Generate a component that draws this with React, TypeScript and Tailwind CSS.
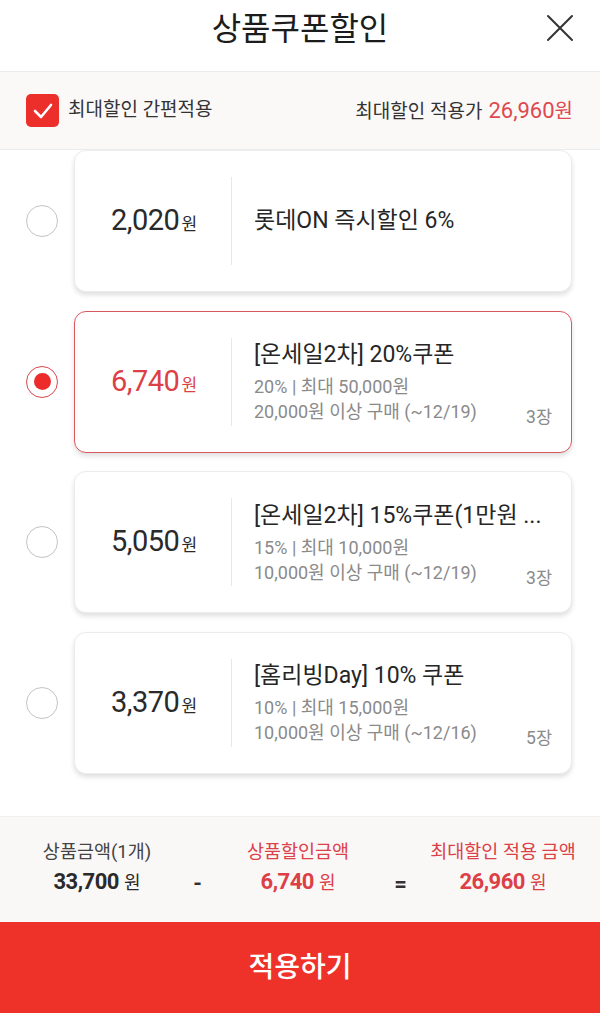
import React from "react";

type Coupon = {
  amount: string;
  title: string;
  sub?: string[];
  count?: string;
  selected?: boolean;
};

const coupons: Coupon[] = [
  { amount: "2,020", title: "롯데ON 즉시할인 6%" },
  {
    amount: "6,740",
    title: "[온세일2차] 20%쿠폰",
    sub: ["20% | 최대 50,000원", "20,000원 이상 구매 (~12/19)"],
    count: "3장",
    selected: true,
  },
  {
    amount: "5,050",
    title: "[온세일2차] 15%쿠폰(1만원 ...",
    sub: ["15% | 최대 10,000원", "10,000원 이상 구매 (~12/19)"],
    count: "3장",
  },
  {
    amount: "3,370",
    title: "[홈리빙Day] 10% 쿠폰",
    sub: ["10% | 최대 15,000원", "10,000원 이상 구매 (~12/16)"],
    count: "5장",
  },
];

function Radio({ on }: { on?: boolean }) {
  return on ? (
    <div className="w-[32px] h-[32px] rounded-full border-[1.5px] border-[#d8474d] flex items-center justify-center shrink-0">
      <div className="w-[17px] h-[17px] rounded-full bg-[#ee2b2b]" />
    </div>
  ) : (
    <div className="w-[32px] h-[32px] rounded-full border-[1.5px] border-[#c4c4c4] shrink-0" />
  );
}

function CouponCard({ c }: { c: Coupon }) {
  const tone = c.selected ? "text-[#dc3f45]" : "text-[#2a2a2a]";
  return (
    <div className="flex items-center pl-[26px] pr-[28px] gap-[16px]">
      <Radio on={c.selected} />
      <div
        className={
          "relative flex-1 min-w-0 h-[142px] rounded-[12px] bg-white flex items-center shadow-[0_3px_5px_rgba(0,0,0,0.13)] " +
          (c.selected ? "border-[1.5px] border-[#d9585d]" : "border border-[#ececec]")
        }
      >
        <div className="w-[156px] shrink-0 flex items-baseline justify-center pl-[2px]">
          <span className={"text-[29px] tracking-[-0.5px] " + tone}>{c.amount}</span>
          <span className={"text-[17px] ml-[2px] " + tone}>원</span>
        </div>
        <div className="w-px h-[88px] bg-[#e8e8e8] shrink-0" />
        <div className="flex-1 min-w-0 pl-[22px] pr-[24px]">
          <div className="text-[23px] text-[#262626] whitespace-nowrap leading-[32px]">
            {c.title}
          </div>
          {c.sub && (
            <div className="mt-[3px] text-[18px] text-[#8a8a8a] leading-[25px]">
              {c.sub.map((s) => (
                <div key={s}>{s}</div>
              ))}
            </div>
          )}
        </div>
        {c.count && (
          <div className="absolute right-[19px] bottom-[21px] text-[17.5px] text-[#8a8a8a]">
            {c.count}
          </div>
        )}
      </div>
    </div>
  );
}

function SumCol({
  label,
  value,
  red,
}: {
  label: string;
  value: string;
  red?: boolean;
}) {
  return (
    <div className="w-[170px] flex flex-col items-center">
      <span
        className={
          "text-[18.5px] leading-[28px] whitespace-nowrap " +
          (red ? "text-[#dc4048]" : "text-[#444]")
        }
      >
        {label}
      </span>
      <span className="flex items-baseline leading-[32px]">
        <span
          className={
            "text-[22px] font-bold tracking-[-0.5px] " +
            (red ? "text-[#dc3f46]" : "text-[#2a2a2a]")
          }
        >
          {value}
        </span>
        <span className={"text-[18px] ml-[5px] " + (red ? "text-[#dc3f46]" : "text-[#2a2a2a]")}>
          원
        </span>
      </span>
    </div>
  );
}

export default function App() {
  return (
    <div
      className="w-[600px] h-[1013px] flex flex-col bg-white overflow-hidden"
      style={{ fontFamily: 'Roboto, "Noto Sans CJK KR", sans-serif' }}
    >
      {/* Header */}
      <div className="relative h-[72px] shrink-0 flex items-center justify-center border-b border-[#ececec]">
        <div className="text-[32px] text-[#1c1c1c] -mt-[14px]">상품쿠폰할인</div>
        <button className="absolute right-[26px] top-[14px] w-[28px] h-[28px] flex items-center justify-center">
          <svg width="28" height="28" viewBox="0 0 28 28" fill="none">
            <path d="M2 2 L26 26 M26 2 L2 26" stroke="#333" strokeWidth="2" strokeLinecap="round" />
          </svg>
        </button>
      </div>

      {/* Option bar */}
      <div className="h-[78px] shrink-0 bg-[#fbf9f8] border-b border-[#ececec] flex items-center justify-between pl-[26px] pr-[27px]">
        <div className="flex items-center gap-[9px]">
          <div className="w-[33px] h-[33px] rounded-[5px] bg-[#ec2f2b] flex items-center justify-center">
            <svg width="22" height="22" viewBox="0 0 22 22" fill="none">
              <path d="M3 11 L9 17 L19 5" stroke="white" strokeWidth="2.6" strokeLinecap="round" strokeLinejoin="round" />
            </svg>
          </div>
          <span className="text-[19px] text-[#333]">최대할인 간편적용</span>
        </div>
        <div className="flex items-baseline text-[19px] text-[#333]">
          <span>최대할인 적용가</span>
          <span className="ml-[6px] text-[22px] text-[#e04850]">26,960</span>
          <span className="text-[20px] text-[#e04850]">원</span>
        </div>
      </div>

      {/* List */}
      <div className="flex-1 min-h-0 overflow-hidden">
        <div className="flex flex-col gap-[18.5px]">
          {coupons.map((c) => (
            <CouponCard key={c.amount} c={c} />
          ))}
        </div>
      </div>

      {/* Summary */}
      <div className="h-[106px] shrink-0 bg-[#faf8f7] border-t border-[#efefef] flex items-center justify-between px-[12px] pb-[2px]">
        <SumCol label="상품금액(1개)" value="33,700" />
        <span className="text-[22px] font-bold text-[#333] mt-[30px]">-</span>
        <SumCol label="상품할인금액" value="6,740" red />
        <span className="text-[22px] font-bold text-[#333] mt-[30px]">=</span>
        <SumCol label="최대할인 적용 금액" value="26,960" red />
      </div>

      {/* Button */}
      <button className="h-[91px] shrink-0 w-full bg-[#ee3129] flex items-center justify-center">
        <span className="text-[28px] font-medium text-white">적용하기</span>
      </button>
    </div>
  );
}
